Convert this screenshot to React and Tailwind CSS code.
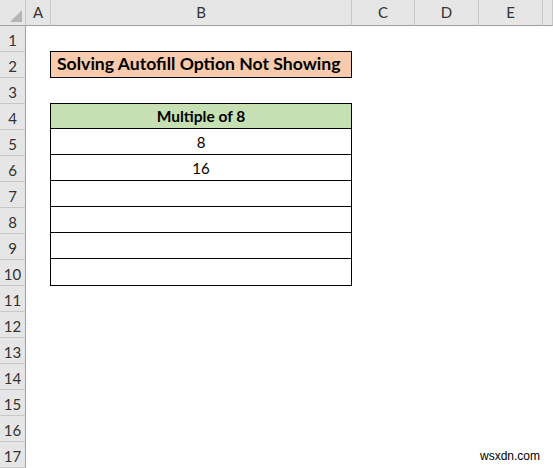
import React from "react";

const cols = ["A", "B", "C", "D", "E", ""];
const rows = Array.from({ length: 17 }, (_, i) => i + 1);
const font = { fontFamily: "Lato, 'Open Sans', sans-serif" };

function ColHeader({ label }) {
  return (
    <div className="h-[26px] bg-[#e6e6e6] border-r border-b border-r-[#c8c8c8] border-b-[#a0a0a0] flex items-center justify-center text-[15px] text-[#333]">
      {label}
    </div>
  );
}

function RowHeader({ n }) {
  return (
    <div className="h-[26px] bg-[#e6e6e6] border-r border-b border-r-[#a0a0a0] border-b-[#c8c8c8] flex items-center justify-center pt-[4px] text-[15px] text-[#333]">
      {n}
    </div>
  );
}

export default function App() {
  return (
    <div className="relative w-[553px] h-[468px] overflow-hidden bg-white" style={font}>
      <div className="grid grid-cols-[26px_25px_301px_63px_64px_64px_1fr] grid-rows-[26px_repeat(17,26px)]">
        {/* corner */}
        <div className="relative h-[26px] bg-[#e6e6e6] border-r border-b border-r-[#c8c8c8] border-b-[#a0a0a0]">
          <div className="absolute right-[3px] bottom-[3px] w-0 h-0 border-l-[12px] border-l-transparent border-b-[12px] border-b-[#b5b5b5]" />
        </div>
        {cols.map((c, i) => (
          <ColHeader key={i} label={c} />
        ))}

        {/* row numbers */}
        {rows.map((n) => (
          <div key={n} style={{ gridColumn: 1, gridRow: n + 1 }}>
            <RowHeader n={n} />
          </div>
        ))}

        {/* B2 title */}
        <div style={{ gridColumn: 3, gridRow: 3 }} className="relative">
          <div className="-mt-px -ml-px w-[302px] h-[27px] bg-[#f8cbad] border border-black flex items-center pl-[6px] text-[17.6px] font-bold text-black">
            Solving Autofill Option Not Showing
          </div>
        </div>

        {/* B4:B10 table */}
        <div style={{ gridColumn: 3, gridRow: "5 / span 7" }}>
          <div className="-mt-px -ml-px w-[302px] border border-black flex flex-col divide-y divide-black text-[15px] text-black">
            <div className="h-[25px] bg-[#c6e0b4] flex items-center justify-center font-bold text-[15.5px] pt-[1px]">Multiple of 8</div>
            <div className="h-[26px] flex items-center justify-center pt-[1px]">8</div>
            <div className="h-[26px] flex items-center justify-center pt-[1px]">16</div>
            <div className="h-[26px]" />
            <div className="h-[26px]" />
            <div className="h-[26px]" />
            <div className="h-[26px]" />
          </div>
        </div>
      </div>

      <div
        className="absolute left-[480px] top-[447px] text-[12px] text-black"
        style={{ fontFamily: "'Liberation Sans', Arial, sans-serif" }}
      >
        wsxdn.com
      </div>
    </div>
  );
}
